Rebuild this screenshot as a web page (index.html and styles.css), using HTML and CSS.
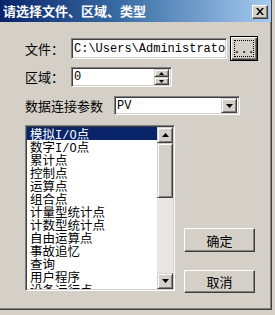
FILE: index.html
```html
<!DOCTYPE html>
<html>
<head>
<meta charset="utf-8">
<link rel="stylesheet" href="styles.css">
</head>
<body>
<div class="window">
  <div class="titlebar">
    <span class="title">请选择文件、区域、类型</span>
    <div class="close"><svg width="8" height="7" viewBox="0 0 8 7"><path d="M0 0h2l2 2.5 2-2.5h2L5 3.5 8 7H6L4 4.5 2 7H0l3-3.5z" fill="#000"/></svg></div>
  </div>
  <div class="content">
    <div class="row r1">
      <span class="label l1">文件：</span>
      <div class="field f-path"><span class="mono">C:\Users\Administrator</span></div>
      <div class="btn browse"><span class="focusrect">...</span></div>
    </div>
    <div class="row r2">
      <span class="label l1">区域：</span>
      <div class="field f-spin">
        <span class="mono val">0</span>
        <div class="spin">
          <div class="sbtn"><svg width="5" height="3" viewBox="0 0 5 3"><path d="M2.5 0L5 3H0z" fill="#000"/></svg></div>
          <div class="sbtn"><svg width="5" height="3" viewBox="0 0 5 3"><path d="M0 0h5L2.5 3z" fill="#000"/></svg></div>
        </div>
      </div>
    </div>
    <div class="row r3">
      <span class="label l3">数据连接参数</span>
      <div class="field f-select">
        <span class="mono val">PV</span>
        <div class="ddbtn"><svg width="7" height="4" viewBox="0 0 7 4"><path d="M0 0h7L3.5 4z" fill="#000"/></svg></div>
      </div>
    </div>
    <div class="lower">
      <div class="listbox">
        <ul class="items">
          <li class="item sel">模拟<span class="lat">I/O</span>点</li>
          <li class="item">数字<span class="lat">I/O</span>点</li>
          <li class="item">累计点</li>
          <li class="item">控制点</li>
          <li class="item">运算点</li>
          <li class="item">组合点</li>
          <li class="item">计量型统计点</li>
          <li class="item">计数型统计点</li>
          <li class="item">自由运算点</li>
          <li class="item">事故追忆</li>
          <li class="item">查询</li>
          <li class="item">用户程序</li>
          <li class="item">设备运行点</li>
        </ul>
        <div class="scrollbar">
          <div class="arrow"><svg width="7" height="4" viewBox="0 0 7 4"><path d="M3.5 0L7 4H0z" fill="#000"/></svg></div>
          <div class="thumb"></div>
          <div class="track"></div>
          <div class="arrow"><svg width="7" height="4" viewBox="0 0 7 4"><path d="M0 0h7L3.5 4z" fill="#000"/></svg></div>
        </div>
      </div>
      <div class="actions">
        <div class="btn act ok">确定</div>
        <div class="btn act cancel">取消</div>
      </div>
    </div>
  </div>
</div>
</body>
</html>
```
FILE: styles.css
```css
html, body {
  margin: 0;
  padding: 0;
  background: #d4d0c8;
}
body {
  font-family: "Noto Sans CJK SC", "Noto Sans", sans-serif;
  font-size: 13px;
  color: #000;
  width: 275px;
  height: 315px;
  overflow: hidden;
}
.window {
  width: 271px;
  height: 309px;
  background: #d4d0c8;
  border-right: 1px solid #404040;
  border-bottom: 1px solid #404040;
  box-shadow: inset -1px -1px #808080;
  display: flex;
  flex-direction: column;
}
.titlebar {
  height: 22px;
  background: linear-gradient(to right, #0a246a 0%, #3a6ea5 45%, #a6caf0 100%);
  display: flex;
  align-items: center;
  justify-content: space-between;
  padding: 0 3px 0 3px;
  flex-shrink: 0;
}
.title {
  color: #fff;
  font-weight: bold;
  font-size: 13px;
  line-height: 16px;
  white-space: nowrap;
}
.close {
  width: 14px;
  height: 12px;
  background: #d4d0c8;
  border-top: 1px solid #fff;
  border-left: 1px solid #fff;
  border-right: 1px solid #404040;
  border-bottom: 1px solid #404040;
  box-shadow: inset -1px -1px #808080;
  display: flex;
  align-items: center;
  justify-content: center;
  margin-top: 1px;
}
.content {
  padding: 14px 0 0 25px;
}
.row {
  display: flex;
  align-items: center;
}
.r1 { height: 25px; }
.r2 { height: 20px; margin-top: 6px; }
.r3 { height: 19px; margin-top: 9px; }
.label {
  white-space: nowrap;
  line-height: 14px;
  flex-shrink: 0;
}
.l1 { width: 46px; }
.l3 { width: 89px; }
.field {
  box-sizing: border-box;
  background: #fff;
  border-top: 1px solid #808080;
  border-left: 1px solid #808080;
  border-right: 1px solid #fff;
  border-bottom: 1px solid #fff;
  box-shadow: inset 1px 1px #404040, inset -1px -1px #d4d0c8;
  display: flex;
  align-items: center;
  overflow: hidden;
  flex-shrink: 0;
}
.mono {
  font-family: "Liberation Mono", monospace;
  font-size: 12px;
  white-space: nowrap;
  padding-left: 2px;
}
.f-path {
  width: 156px;
  height: 21px;
}
.f-path .mono {
  overflow: hidden;
  width: 152px;
}
.f-spin {
  width: 101px;
  height: 20px;
  padding: 2px 2px 2px 0;
}
.f-spin .val { flex: 1; }
.spin {
  width: 15px;
  height: 16px;
  display: flex;
  flex-direction: column;
}
.sbtn, .ddbtn, .arrow {
  box-sizing: border-box;
  background: #d4d0c8;
  border-top: 1px solid #d4d0c8;
  border-left: 1px solid #d4d0c8;
  border-right: 1px solid #404040;
  border-bottom: 1px solid #404040;
  box-shadow: inset 1px 1px #fff, inset -1px -1px #808080;
  display: flex;
  align-items: center;
  justify-content: center;
}
.sbtn { height: 8px; }
.f-select {
  width: 126px;
  height: 19px;
  padding: 2px 2px 2px 0;
}
.f-select .val { flex: 1; }
.ddbtn {
  width: 16px;
  height: 15px;
}
.btn {
  box-sizing: border-box;
  background: #d4d0c8;
  border-top: 1px solid #fff;
  border-left: 1px solid #fff;
  border-right: 1px solid #404040;
  border-bottom: 1px solid #404040;
  box-shadow: inset -1px -1px #808080;
  display: flex;
  align-items: center;
  justify-content: center;
  flex-shrink: 0;
}
.browse {
  width: 28px;
  height: 25px;
  margin-left: 3px;
  border: 1px solid #000;
  box-shadow: inset 1px 1px #fff, inset -1px -1px #404040, inset -2px -2px #808080;
}
.focusrect {
  border: 1px dotted #000;
  width: 18px;
  height: 15px;
  display: flex;
  align-items: flex-end;
  justify-content: center;
  font-family: "Liberation Mono", monospace;
  font-size: 12px;
  line-height: 12px;
}
.lower {
  display: flex;
  margin-top: 10px;
}
.listbox {
  box-sizing: border-box;
  width: 150px;
  height: 166px;
  background: #fff;
  border-top: 1px solid #808080;
  border-left: 1px solid #808080;
  border-right: 1px solid #fff;
  border-bottom: 1px solid #fff;
  box-shadow: inset 1px 1px #404040, inset -1px -1px #d4d0c8;
  padding: 1px;
  display: flex;
}
.items {
  list-style: none;
  margin: 0;
  padding: 0;
  flex: 1;
  overflow: hidden;
}
.item {
  height: 13px;
  line-height: 13px;
  font-size: 12.5px;
  padding-left: 3px;
  white-space: nowrap;
}
.item.sel {
  background: #0a246a;
  color: #fff;
}
.lat {
  font-family: "Liberation Mono", monospace;
  font-size: 12px;
}
.scrollbar {
  width: 16px;
  display: flex;
  flex-direction: column;
  background: #e9e7e3;
}
.arrow {
  height: 16px;
  flex-shrink: 0;
}
.thumb {
  box-sizing: border-box;
  height: 55px;
  background: #d4d0c8;
  border-top: 1px solid #d4d0c8;
  border-left: 1px solid #d4d0c8;
  border-right: 1px solid #404040;
  border-bottom: 1px solid #404040;
  box-shadow: inset 1px 1px #fff, inset -1px -1px #808080;
}
.track { flex: 1; }
.actions {
  display: flex;
  flex-direction: column;
  margin-left: 9px;
  padding-top: 103px;
  gap: 18px;
}
.act {
  width: 71px;
  height: 24px;
  font-size: 13px;
}
.cancel { height: 23px; }
```
